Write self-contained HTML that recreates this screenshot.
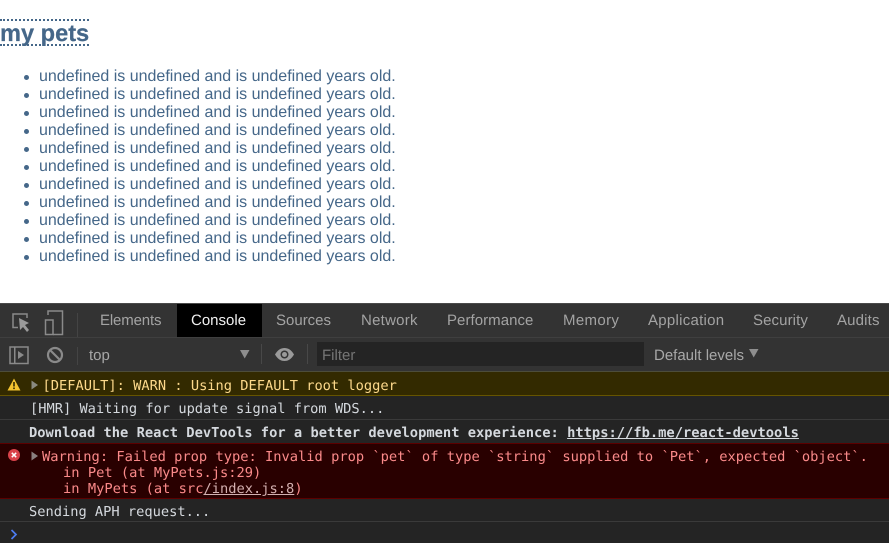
<!DOCTYPE html>
<html><head><meta charset="utf-8"><style>
html,body{margin:0;padding:0;width:889px;height:543px;overflow:hidden;background:#fff}
body{position:relative;font-family:"Liberation Sans",sans-serif;text-rendering:geometricPrecision}
.a{position:absolute;white-space:pre}
h1{position:absolute;margin:0;left:0;top:19px;width:89px;height:23px;border-top:2px dotted #456789;border-bottom:2px dotted #456789;font-size:23.6px;line-height:27px;color:#456789;font-weight:bold;white-space:pre;-webkit-text-stroke:.25px #456789}
.li{position:absolute;left:39px;font-size:16px;line-height:18px;color:#456789;white-space:pre}
.li:before{content:"";position:absolute;left:-15px;top:7px;width:5px;height:5px;border-radius:50%;background:#456789}
.tab{position:absolute;top:305px;height:33px;line-height:32px;font-size:15px;color:#a3a3a3;white-space:pre}
.m{position:absolute;font-family:"DejaVu Sans Mono","Liberation Mono",monospace;font-size:13.73px;line-height:16px;white-space:pre}
</style></head><body>
<h1>my pets</h1>
<div class="li" style="top:68px">undefined is undefined and is undefined years old.</div>
<div class="li" style="top:86px">undefined is undefined and is undefined years old.</div>
<div class="li" style="top:104px">undefined is undefined and is undefined years old.</div>
<div class="li" style="top:122px">undefined is undefined and is undefined years old.</div>
<div class="li" style="top:140px">undefined is undefined and is undefined years old.</div>
<div class="li" style="top:158px">undefined is undefined and is undefined years old.</div>
<div class="li" style="top:176px">undefined is undefined and is undefined years old.</div>
<div class="li" style="top:194px">undefined is undefined and is undefined years old.</div>
<div class="li" style="top:212px">undefined is undefined and is undefined years old.</div>
<div class="li" style="top:230px">undefined is undefined and is undefined years old.</div>
<div class="li" style="top:248px">undefined is undefined and is undefined years old.</div>

<div class="a" style="left:0;top:303px;width:889px;height:240px;background:#242424"></div>
<div class="a" style="left:0;top:303px;width:889px;height:1px;background:#4a4a4a"></div>
<div class="a" style="left:0;top:304px;width:889px;height:33px;background:#333"></div>
<div class="a" style="left:0;top:337px;width:889px;height:1px;background:#3f3f3f"></div>
<div class="a" style="left:0;top:338px;width:889px;height:33px;background:#333"></div>
<div class="a" style="left:177px;top:304px;width:85px;height:33px;background:#000"></div>

<div class="tab" style="left:100px;letter-spacing:-.15px">Elements</div>
<div class="tab" style="left:191px;color:#f0f0f0">Console</div>
<div class="tab" style="left:276px">Sources</div>
<div class="tab" style="left:361px;letter-spacing:.25px">Network</div>
<div class="tab" style="left:447px;letter-spacing:.05px">Performance</div>
<div class="tab" style="left:563px;letter-spacing:.35px">Memory</div>
<div class="tab" style="left:648px;letter-spacing:.27px">Application</div>
<div class="tab" style="left:753px;letter-spacing:.1px">Security</div>
<div class="tab" style="left:837px;letter-spacing:.15px">Audits</div>

<svg class="a" style="left:0;top:303px" width="90" height="70" viewBox="0 0 90 70" fill="none">
<path d="M18 24.500H13V11H27V15" stroke="#8a8a8a" stroke-width="1.500"/>
<path d="M19 15L29 20L25 22L29 27L27 29L23 24L20 27Z" fill="#9a9a9a"/>
<path d="M48 12V8H62.500V31.500H53" stroke="#8a8a8a" stroke-width="1.500"/>
<rect x="45.500" y="17" width="7.500" height="14.500" stroke="#8a8a8a" stroke-width="1.500"/>
<rect x="77" y="10" width="1" height="24" fill="#444"/>
<rect x="10" y="44" width="18" height="16.500" stroke="#8a8a8a" stroke-width="1.500"/>
<rect x="14" y="44" width="1.500" height="16" fill="#8a8a8a"/>
<path d="M18 48L24 52L18 56Z" fill="#8a8a8a"/>
<circle cx="55" cy="52" r="7" stroke="#8a8a8a" stroke-width="2.200"/>
<path d="M50 47L60 57" stroke="#8a8a8a" stroke-width="2.200"/>
<rect x="77" y="44" width="1" height="18" fill="#444"/>
</svg>

<div class="tab" style="left:89px;top:339px;line-height:33px;color:#a8a8a8">top</div>
<svg class="a" style="left:240px;top:350px" width="10" height="9"><path d="M0 0H9.500L4.700 8.500Z" fill="#8e8e8e"/></svg>
<div class="a" style="left:261px;top:344px;width:1px;height:20px;background:#484848"></div>
<svg class="a" style="left:274px;top:347px" width="22" height="15" viewBox="0 0 22 15"><path d="M1 7.500C4 2.500 7 1 10.500 1S17 2.500 20 7.500C17 12.500 14 14 10.500 14S4 12.500 1 7.500Z" fill="#9a9a9a"/><circle cx="10.500" cy="7.500" r="4" fill="#333"/><circle cx="10.500" cy="7.500" r="2.500" fill="#9a9a9a"/></svg>
<div class="a" style="left:307px;top:344px;width:1px;height:20px;background:#484848"></div>
<div class="a" style="left:317px;top:342px;width:327px;height:24px;background:#242424"></div>
<div class="tab" style="left:322px;top:343px;line-height:25px;color:#757575">Filter</div>
<div class="tab" style="left:654px;top:339px;line-height:33px;color:#a8a8a8">Default levels</div>
<svg class="a" style="left:749px;top:349px" width="10" height="9"><path d="M0 0H9.500L4.700 8.500Z" fill="#8e8e8e"/></svg>

<div class="a" style="left:0;top:371px;width:889px;height:1px;background:#4d4d3a"></div>
<div class="a" style="left:0;top:372px;width:889px;height:23px;background:#332a00"></div>
<div class="a" style="left:0;top:395px;width:889px;height:1px;background:#665500"></div>
<div class="a" style="left:0;top:419px;width:889px;height:1px;background:#3a3a3a"></div>
<div class="a" style="left:0;top:443px;width:889px;height:1px;background:#5c0000"></div>
<div class="a" style="left:0;top:444px;width:889px;height:54px;background:#290000"></div>
<div class="a" style="left:0;top:498px;width:889px;height:1px;background:#5c0000"></div>
<div class="a" style="left:0;top:521px;width:889px;height:1px;background:#3a3a3a"></div>

<svg class="a" style="left:7px;top:378px" width="14" height="13"><path d="M7 0.500L13.500 12.500H0.500Z" fill="#f4c430"/><rect x="6.200" y="4" width="1.600" height="4.500" fill="#332a00"/><rect x="6.200" y="9.500" width="1.600" height="1.600" fill="#332a00"/></svg>
<svg class="a" style="left:31px;top:380px" width="8" height="10"><path d="M0.500 0.500L7 5L0.500 9.500Z" fill="#8a8a80"/></svg>
<div class="m" style="left:42.500px;top:378px;color:#fdd98b;font-size:13.7px">[DEFAULT]: WARN : Using DEFAULT root logger</div>
<div class="m" style="left:30px;top:401px;color:#d5d9de;font-size:13.7px">[HMR] Waiting for update signal from WDS...</div>
<div class="m" style="left:29px;top:425px;color:#d5d9de;font-weight:bold;font-size:13.75px">Download the React DevTools for a better development experience: <span style="text-decoration:underline">https://fb.me/react-devtools</span></div>

<svg class="a" style="left:8px;top:449px" width="12" height="12"><circle cx="6" cy="6" r="6" fill="#d9424a"/><path d="M3.800 3.800L8.200 8.200M8.200 3.800L3.800 8.200" stroke="#fff" stroke-width="1.500"/></svg>
<svg class="a" style="left:31px;top:451px" width="8" height="10"><path d="M0.500 0.500L7 5L0.500 9.500Z" fill="#8a8080"/></svg>
<div class="m" style="left:42px;top:449px;color:#fb8a8a">Warning: Failed prop type: Invalid prop `pet` of type `string` supplied to `Pet`, expected `object`.</div>
<div class="m" style="left:30px;top:465px;color:#fb8a8a">    in Pet (at MyPets.js:29)</div>
<div class="m" style="left:30px;top:481px;color:#fb8a8a">    in MyPets (at src<span style="text-decoration:underline;color:#d4b0b0">/index.js:8</span>)</div>
<div class="m" style="left:29px;top:504px;color:#d5d9de;font-size:13.7px">Sending APH request...</div>
<svg class="a" style="left:10px;top:529px" width="8" height="11"><path d="M1.500 1L6 5.500L1.500 10" fill="none" stroke="#4d7cf0" stroke-width="1.700"/></svg>
</body></html>
